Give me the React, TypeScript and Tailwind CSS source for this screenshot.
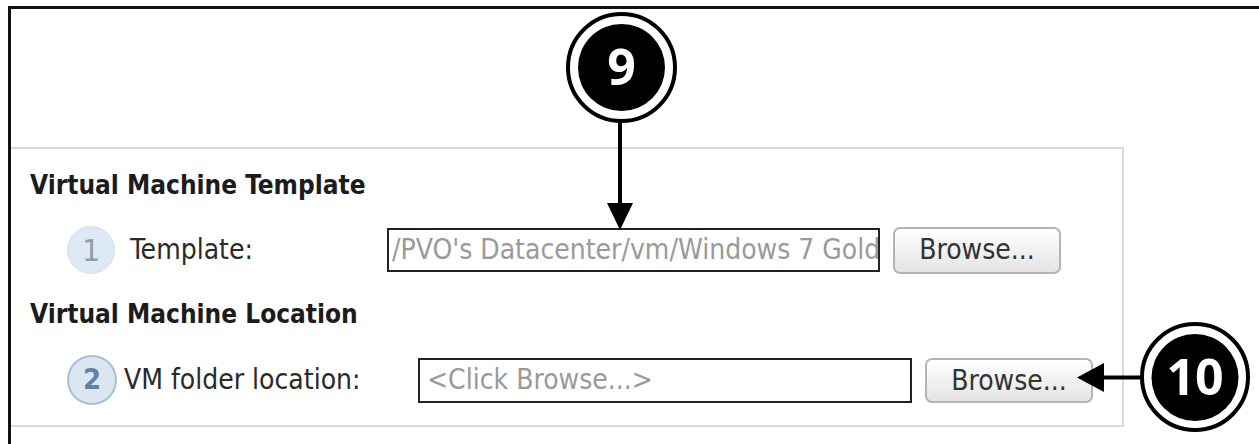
import React from 'react';

const font = { fontFamily: "'DejaVu Sans Condensed', 'DejaVu Sans', sans-serif" };

const Step: React.FC<{ n: string; active?: boolean }> = ({ n, active }) =>
  active ? (
    <div className="w-[50px] h-[50px] shrink-0 rounded-full bg-[#dce6f0] border-2 border-[#a9bed3] flex items-center justify-center text-[29px] font-bold text-[#5f82a8]">
      {n}
    </div>
  ) : (
    <div className="w-[48px] h-[48px] shrink-0 rounded-full bg-[#dde9f4] border border-[#d3e0ec] flex items-center justify-center text-[31px] text-[#8f9ca8]">
      {n}
    </div>
  );

const BrowseButton: React.FC<{ className?: string }> = ({ className }) => (
  <button
    className={`shrink-0 w-[168px] rounded-[7px] border-2 border-[#b4b4b4] bg-gradient-to-b from-white to-[#e4e4e4] text-[28px] text-[#333] ${className ?? ''}`}
  >
    Browse...
  </button>
);

export default function App() {
  return (
    <div className="relative w-[1259px] h-[444px] bg-white overflow-hidden" style={font}>
      {/* screenshot frame */}
      <div className="ml-[8px] mt-[6px] h-[500px] border-l-[3px] border-t-[3px] border-[#111]">
        <div className="h-[138px]" />

        {/* wizard panel */}
        <div className="w-[1113px] border-t-2 border-r-2 border-b-2 border-[#d9d9d9] pt-[21px] pb-[20px] pl-[19px]">
          <h2 className="text-[26px] leading-[30px] font-bold text-[#1c1c1c]">Virtual Machine Template</h2>

          <div className="mt-[26px] h-[48px] flex items-center pl-[37px]">
            <Step n="1" />
            <span className="ml-[15px] w-[257px] text-[28px] text-[#2a2a2a]">Template:</span>
            <div className="w-[493px] h-[44px] border-2 border-[#222] flex items-center pl-[3px] overflow-hidden whitespace-nowrap text-[28px] text-[#9a9a9a]">
              /PVO's Datacenter/vm/Windows 7 Gold
            </div>
            <BrowseButton className="ml-[13px] h-[47px]" />
          </div>

          <h2 className="mt-[25px] text-[26px] leading-[30px] font-bold text-[#1c1c1c]">Virtual Machine Location</h2>

          <div className="mt-[26px] h-[50px] flex items-center pl-[37px]">
            <Step n="2" active />
            <span className="ml-[7px] w-[294px] text-[28px] text-[#2a2a2a]">VM folder location:</span>
            <div className="w-[494px] h-[45px] border-2 border-[#222] flex items-center pl-[7px] overflow-hidden whitespace-nowrap text-[28px] text-[#9a9a9a]">
              &lt;Click Browse...&gt;
            </div>
            <BrowseButton className="ml-[13px] h-[45px]" />
          </div>
        </div>
      </div>

      {/* callout annotations */}
      <svg className="absolute inset-0 pointer-events-none" width="1259" height="444" viewBox="0 0 1259 444">
        <circle cx="621.5" cy="67.5" r="53.5" fill="white" stroke="black" strokeWidth="4" />
        <circle cx="621.5" cy="67.5" r="43.5" fill="black" />
        <text x="621.5" y="85" textAnchor="middle" fill="white" fontSize="50" fontWeight="700" fontFamily="'Open Sans', sans-serif">9</text>
        <line x1="620" y1="121" x2="620" y2="206" stroke="black" strokeWidth="4" />
        <polygon points="607,203 633,203 620,230" fill="black" />

        <line x1="1100" y1="377.5" x2="1142" y2="377.5" stroke="black" strokeWidth="4" />
        <polygon points="1077,377.5 1104,363 1104,392" fill="black" />
        <circle cx="1195" cy="377" r="53" fill="white" stroke="black" strokeWidth="4" />
        <circle cx="1195" cy="377.5" r="43.5" fill="black" />
        <text x="1195" y="395" textAnchor="middle" fill="white" fontSize="50" fontWeight="700" fontFamily="'Open Sans', sans-serif">10</text>
      </svg>
    </div>
  );
}
